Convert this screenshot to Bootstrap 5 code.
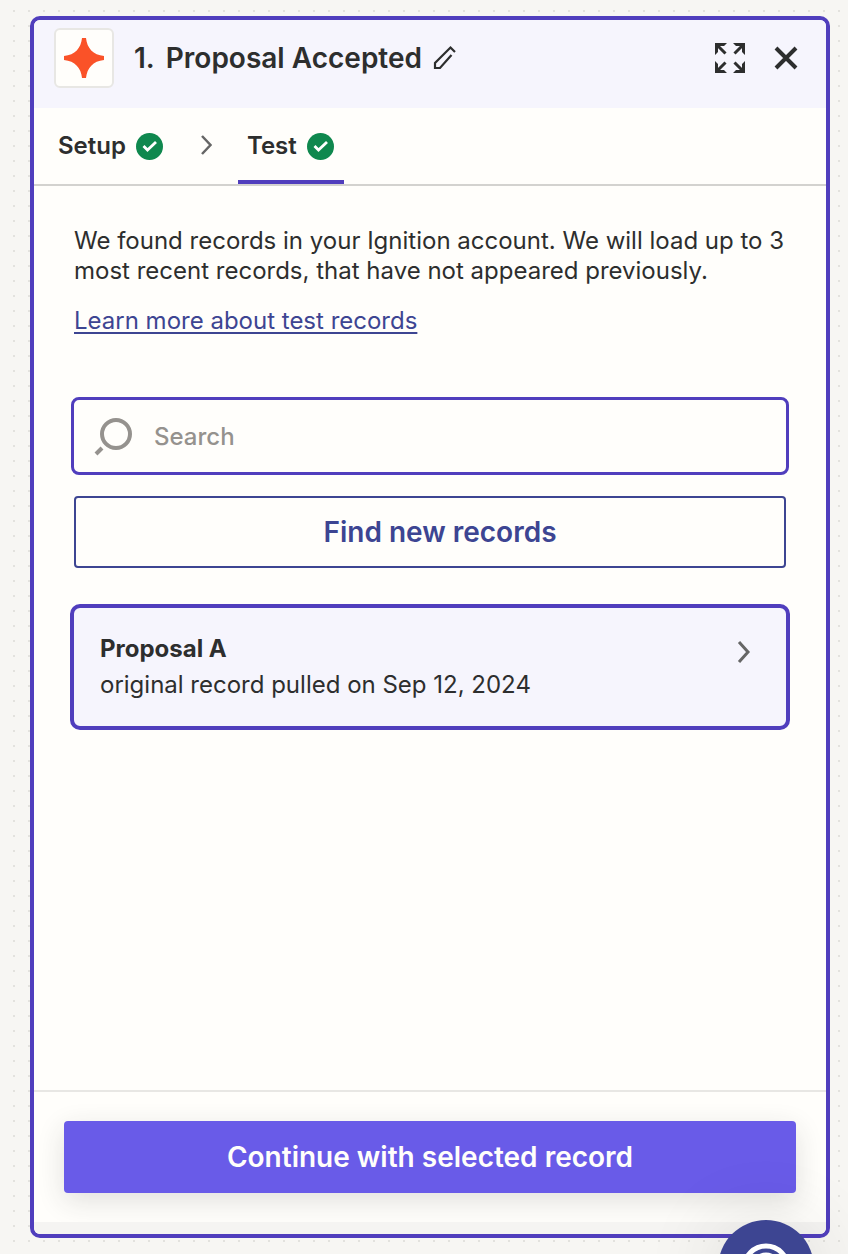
<!DOCTYPE html>
<html lang="en">
<head>
<meta charset="utf-8">
<meta name="viewport" content="width=device-width, initial-scale=1">
<title>Proposal Accepted</title>
<link href="https://cdn.jsdelivr.net/npm/bootstrap@5.3.0/dist/css/bootstrap.min.css" rel="stylesheet">
<style>
  :root { --accent: #503ebd; --navy: #3d4592; --ink: #2d2e2e; --paper: #fffefb; --tint: #f6f5fd; }
  body { font-family: Inter, sans-serif; font-size: 24px; line-height: 30px; color: var(--ink);
    background: radial-gradient(circle at 14px 11px, #e3e2de 1px, transparent 1px) 0 0 / 15px 15px #f7f6f3; }
  .canvas-area { padding: 16px 18px 16px 30px; }
  .step-panel { border: 4px solid var(--accent); border-radius: 10px; background: var(--paper); overflow: hidden; }
  .step-header { height: 88px; padding: 0 24px 12px 20px; background: var(--tint); }
  .app-logo { width: 60px; height: 60px; border: 2px solid #e8e7e4; border-radius: 6px; background: var(--paper); }
  .step-title { font-size: 28px; line-height: 36px; font-weight: 600; gap: 11px; }
  .icon-button { border: 0; padding: 0; background: none; color: var(--ink); display: flex; }
  .close-button { margin-left: 25px; }
  .step-tabs { height: 78px; padding-left: 15px; border-bottom: 2px solid #d3d2cf; }
  .step-tab { border: 0; border-bottom: 4px solid transparent; padding: 4px 10px 0 9px; background: none; color: var(--ink); font-weight: 600; gap: 10px; }
  .step-tab.active { border-color: var(--accent); }
  .tab-arrow { width: 65px; padding-left: 24px; color: #666; }
  .step-body { padding: 40px 36px; }
  .intro { padding: 0 4px; }
  .intro p { margin-bottom: 20px; }
  .intro a { color: var(--navy); text-underline-offset: 3px; text-decoration-thickness: 2px; }
  .search-box { height: 78px; margin: 61px 1px 21px; padding: 0 20px; gap: 20px; border: 3px solid var(--accent); border-radius: 8px; color: #95928e; }
  .search-box input, .search-box input:focus { border: 0; padding: 2px 0 0; background: none; box-shadow: none; font-size: 24px; font-weight: 500; color: var(--ink); }
  .search-box input::placeholder { color: #95928e; opacity: 1; }
  .find-button { height: 72px; border: 2px solid var(--navy); border-radius: 4px; background: none; color: var(--navy); font-size: 28px; font-weight: 600; margin: 0 4px 36px; padding: 0 0 0 20px; }
  .record-card { padding: 23px 34px 23px 26px; border: 4px solid var(--accent); border-radius: 10px; background: var(--tint); color: var(--ink); line-height: 36px; }
  .record-card svg { color: #666; margin-top: 9px; }
  .step-footer { padding: 29px 30px; border-top: 2px solid #e8e7e4; }
  .continue-button { height: 72px; border: 0; border-radius: 4px; background: #695be8; color: var(--paper); font-size: 28px; font-weight: 600; box-shadow: 0 8px 28px rgba(45,46,46,.14); }
  .panel-base { height: 12px; background: #f5f4f2; }
  .help-button { position: fixed; right: 34px; bottom: -62px; width: 96px; height: 96px; border: 0; padding: 0; border-radius: 50%; background: var(--navy); color: #fff; box-shadow: 0 4px 80px rgba(45,46,46,.14); }
</style>
</head>
<body>
<main class="canvas-area d-flex min-vh-100">
  <section class="step-panel d-flex flex-column flex-grow-1" aria-label="Step editor">
    <header class="step-header d-flex align-items-center">
      <div class="app-logo d-flex align-items-center justify-content-center flex-shrink-0">
        <svg width="40" height="40" viewBox="0 0 40 40" aria-hidden="true"><path fill="#fa5228" d="M18 0h4c1 10 7 17 18 18v4c-11 1-17 8-18 18h-4C17 30 11 23 0 22v-4C11 17 17 10 18 0Z"/></svg>
      </div>
      <h1 class="step-title d-flex mb-0 ms-3 ps-1"><span>1.</span><span>Proposal Accepted</span></h1>
      <button type="button" class="icon-button ms-2" aria-label="Rename step">
        <svg width="28" height="28" viewBox="0 0 28 28" fill="none" stroke="currentColor" stroke-width="2.200"><path d="m25 8-4.500-4.500L5 19v5h5L21.500 11"/></svg>
      </button>
      <button type="button" class="icon-button ms-auto" aria-label="Expand panel">
        <svg width="30" height="30" viewBox="0 0 30 30" fill="none" stroke="currentColor" stroke-width="3"><path d="m2 2 8.500 8.500M28 2l-8.500 8.500M2 28l8.500-8.500M28 28l-8.500-8.500"/><path fill="currentColor" stroke="none" d="M0 0h12L9 3H5L3 5v4l-3 3ZM30 0v12l-3-3V5l-2-2h-4l-3-3ZM0 30V18l3 3v4l2 2h4l3 3ZM30 30H18l3-3h4l2-2v-4l3-3Z"/></svg>
      </button>
      <button type="button" class="icon-button close-button" aria-label="Close panel">
        <svg width="32" height="32" viewBox="0 0 32 32" fill="none" stroke="currentColor" stroke-width="4"><path d="m6 6 20 20M26 6 6 26"/></svg>
      </button>
    </header>
    <nav class="step-tabs d-flex" aria-label="Step stages">
      <button type="button" class="step-tab d-flex align-items-center">Setup
        <svg width="27" height="27" viewBox="0 0 27 27" aria-hidden="true"><circle cx="13.500" cy="13.500" r="13.500" fill="#0f884e"/><path d="m7.500 13 4 4 8.500-8" fill="none" stroke="#fff" stroke-width="2.800"/></svg>
      </button>
      <span class="tab-arrow d-flex align-items-center">
        <svg width="20" height="24" viewBox="0 0 20 24" fill="none" stroke="currentColor" stroke-width="2.500" aria-hidden="true"><path d="m5 2 8.500 9L5 20"/></svg>
      </span>
      <button type="button" class="step-tab active d-flex align-items-center" aria-current="step">Test
        <svg width="27" height="27" viewBox="0 0 27 27" aria-hidden="true"><circle cx="13.500" cy="13.500" r="13.500" fill="#0f884e"/><path d="m7.500 13 4 4 8.500-8" fill="none" stroke="#fff" stroke-width="2.800"/></svg>
      </button>
    </nav>
    <div class="step-body d-flex flex-column flex-grow-1">
      <div class="intro">
        <p>We found records in your Ignition account. We will load up to 3 most recent records, that have not appeared previously.</p>
        <a href="#">Learn more about test records</a>
      </div>
      <label class="search-box d-flex align-items-center">
        <svg class="flex-shrink-0" width="40" height="40" viewBox="0 0 40 40" fill="none" stroke="currentColor" stroke-width="4" aria-hidden="true"><circle cx="22" cy="18" r="14"/><path d="m8 32-6 6"/></svg>
        <input type="search" class="form-control" placeholder="Search" aria-label="Search records">
      </label>
      <button type="button" class="find-button">Find new records</button>
      <button type="button" class="record-card d-flex justify-content-between align-items-start text-start">
        <span><strong class="fw-bold d-block">Proposal A</strong>original record pulled on Sep 12, 2024</span>
        <svg width="16" height="24" viewBox="0 0 16 24" fill="none" stroke="currentColor" stroke-width="3" aria-hidden="true"><path d="m3 2 9 10-9 10"/></svg>
      </button>
    </div>
    <footer class="step-footer d-grid">
      <button type="button" class="continue-button">Continue with selected record</button>
    </footer>
    <div class="panel-base"></div>
  </section>
</main>
<button type="button" class="help-button" aria-label="Help">
  <svg class="d-block" width="96" height="96" viewBox="0 0 96 96" fill="none" stroke="currentColor" stroke-width="5" aria-hidden="true"><circle cx="48" cy="48" r="22"/><circle cx="48" cy="48" r="13"/></svg>
</button>
<script src="https://cdn.jsdelivr.net/npm/bootstrap@5.3.0/dist/js/bootstrap.bundle.min.js"></script>
</body>
</html>
